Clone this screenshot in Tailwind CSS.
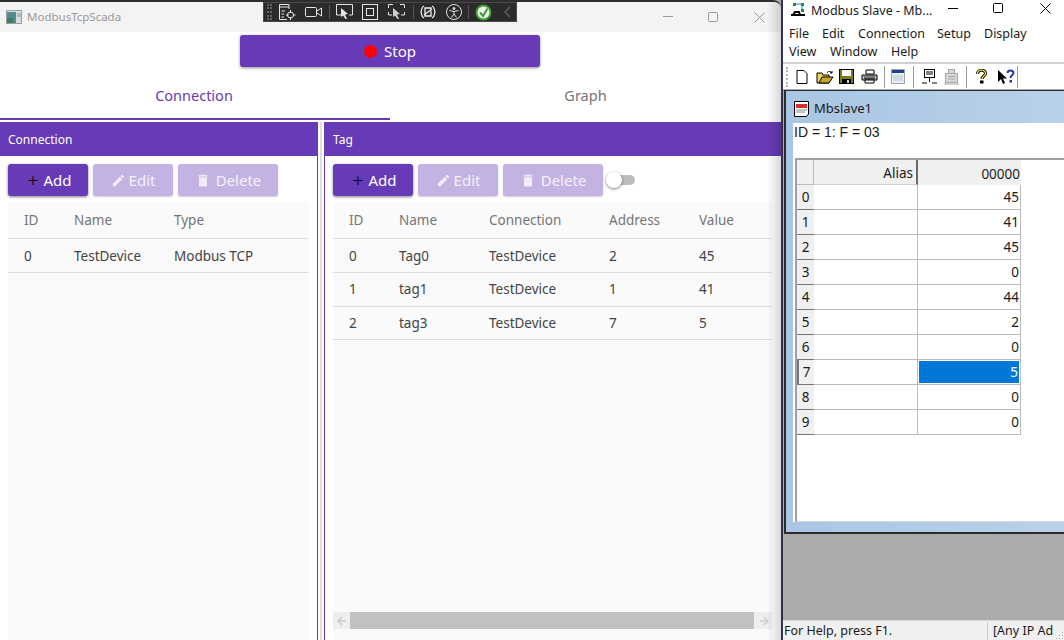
<!DOCTYPE html>
<html lang="en">
<head>
  <meta charset="UTF-8">
  <meta name="viewport" content="width=device-width, initial-scale=1.0">
  <title>ModbusTcpScada</title>
  <script src="https://cdn.jsdelivr.net/npm/@tailwindcss/browser@4"></script>
</head>
<body class="bg-[#ababab]">
  <div class="relative w-[1064px] h-[640px] overflow-hidden [font-family:'Noto_Sans',sans-serif]">

    <!-- ModbusTcpScada window -->
    <div class="absolute left-0 top-0 w-[781px] h-[640px] bg-white flex flex-col border-t-2 border-[#2e2e2e] rounded-tr-lg overflow-hidden">
      <div class="h-[30px] shrink-0 bg-[#f3f3f3] flex items-center pl-[6px] relative">
        <svg width="16" height="14" viewBox="0 0 16 14" class="mr-[5px]">
          <rect x="0.5" y="0.5" width="15" height="13" fill="#d8dde0" stroke="#9aa0a5"/>
          <rect x="1" y="2" width="9" height="11" fill="#4d8d8c"/>
          <rect x="1" y="8" width="6" height="5" fill="#3f7d5e"/>
          <rect x="11" y="3" width="4" height="4" fill="#aeb8c0"/>
        </svg>
        <span class="text-[11.5px] text-[#999999]">ModbusTcpScada</span>
        <svg width="12" height="2" class="absolute left-[663px] top-[14px]"><rect width="10" height="1" fill="#999999"/></svg>
        <svg width="11" height="11" class="absolute left-[708px] top-[10px]"><rect x="0.5" y="0.5" width="9" height="9" rx="1" fill="none" stroke="#999999"/></svg>
        <svg width="11" height="11" class="absolute left-[754px] top-[10px]"><path d="M0.5 0.5L10.5 10.5M10.5 0.5L0.5 10.5" stroke="#999999" fill="none"/></svg>
      </div>

      <div class="h-[36px] shrink-0 flex justify-center items-start pt-[3px] pr-[1px]">
        <button class="w-[300px] h-[32px] bg-[#673ab7] rounded-[3px] shadow-[0_1px_3px_rgba(0,0,0,0.45)] flex items-center justify-center gap-[7px] text-white text-[15px]">
          <span class="w-[13px] h-[13px] rounded-full bg-[#ff0000]"></span>Stop
        </button>
      </div>

      <div class="h-[52px] shrink-0 flex">
        <div class="w-[390px] border-b-2 border-[#673ab7] flex items-center justify-center text-[#673ab7] text-[14.5px] pt-[5px] pr-[2px]">Connection</div>
        <div class="w-[391px] flex items-center justify-center text-[#757575] text-[14.5px] pt-[3px]">Graph</div>
      </div>

      <div class="flex-1 flex pt-[2px] min-h-0">
        <!-- Connection panel -->
        <div class="w-[318px] border-r border-[#673ab7] flex flex-col">
          <div class="h-[34px] shrink-0 bg-[#673ab7] text-white text-[12px] flex items-center pl-[8px] pt-[2px]">Connection</div>
          <div class="flex gap-[5px] px-[8px] pt-[8px] pb-[6px]">
            <button class="w-[80px] h-[32px] bg-[#673ab7] rounded-[3px] shadow-[0_1px_3px_rgba(0,0,0,0.5)] flex items-center justify-center gap-[5px] pt-[1px] pl-[3px] text-white text-[15px]"><span class="text-black text-[19px] leading-none font-light">+</span>Add</button>
            <button class="w-[80px] h-[32px] bg-[#c4b3e2] rounded-[3px] shadow-[0_1px_2px_rgba(0,0,0,0.2)] flex items-center justify-center gap-[3px] pt-[1px] text-white/80 text-[15px]">
              <svg width="15" height="15" viewBox="0 0 24 24" fill="#f1ecf8"><path d="M3 17.25V21h3.75L17.8 9.94l-3.75-3.75L3 17.25zM20.7 7.04a1 1 0 0 0 0-1.41l-2.34-2.34a1 1 0 0 0-1.41 0l-1.83 1.83 3.75 3.75 1.83-1.83z"/></svg>Edit</button>
            <button class="w-[100px] h-[32px] bg-[#c4b3e2] rounded-[3px] shadow-[0_1px_2px_rgba(0,0,0,0.2)] flex items-center justify-center gap-[5px] pt-[1px] text-white/80 text-[15px]">
              <svg width="16" height="17" viewBox="0 0 24 24" fill="#f1ecf8"><path d="M6 19c0 1.1.9 2 2 2h8a2 2 0 0 0 2-2V7H6v12zM19 4h-3.5l-1-1h-5l-1 1H5v2h14V4z"/></svg>Delete</button>
          </div>
          <div class="ml-[8px] w-[301px] flex-1 bg-[#fafafa] rounded-t-[3px] text-[13.5px]">
            <div class="h-[37px] grid grid-cols-[50px_100px_1fr] pl-[16px] items-center border-b border-[#dddddd] text-[#757575]"><span>ID</span><span>Name</span><span>Type</span></div>
            <div class="h-[34px] grid grid-cols-[50px_100px_1fr] pl-[16px] pt-[1px] items-center border-b border-[#dddddd] text-[#444444]"><span>0</span><span>TestDevice</span><span>Modbus TCP</span></div>
          </div>
        </div>

        <div class="w-[6px] flex justify-center"><div class="w-[2px] ml-[-1px] bg-[#dddddd]"></div></div>

        <!-- Tag panel -->
        <div class="flex-1 border-l border-[#673ab7] flex flex-col relative">
          <div class="h-[34px] shrink-0 bg-[#673ab7] text-white text-[12px] flex items-center pl-[8px] pt-[2px]">Tag</div>
          <div class="flex items-center gap-[5px] pl-[8px] pt-[8px] pb-[6px]">
            <button class="w-[80px] h-[32px] bg-[#673ab7] rounded-[3px] shadow-[0_1px_3px_rgba(0,0,0,0.5)] flex items-center justify-center gap-[5px] pt-[1px] pl-[3px] text-white text-[15px]"><span class="text-black text-[19px] leading-none font-light">+</span>Add</button>
            <button class="w-[80px] h-[32px] bg-[#c4b3e2] rounded-[3px] shadow-[0_1px_2px_rgba(0,0,0,0.2)] flex items-center justify-center gap-[3px] pt-[1px] text-white/80 text-[15px]">
              <svg width="15" height="15" viewBox="0 0 24 24" fill="#f1ecf8"><path d="M3 17.25V21h3.75L17.8 9.94l-3.75-3.75L3 17.25zM20.7 7.04a1 1 0 0 0 0-1.41l-2.34-2.34a1 1 0 0 0-1.41 0l-1.83 1.83 3.75 3.75 1.83-1.83z"/></svg>Edit</button>
            <button class="w-[100px] h-[32px] bg-[#c4b3e2] rounded-[3px] shadow-[0_1px_2px_rgba(0,0,0,0.2)] flex items-center justify-center gap-[5px] pt-[1px] text-white/80 text-[15px]">
              <svg width="16" height="17" viewBox="0 0 24 24" fill="#f1ecf8"><path d="M6 19c0 1.1.9 2 2 2h8a2 2 0 0 0 2-2V7H6v12zM19 4h-3.5l-1-1h-5l-1 1H5v2h14V4z"/></svg>Delete</button>
            <div class="relative w-[30px] h-[16px] ml-[-2px]">
              <div class="absolute left-[8px] top-[3px] w-[21px] h-[10px] rounded-full bg-[#bdbdbd]"></div>
              <div class="absolute left-0 top-0 w-[16px] h-[16px] rounded-full bg-white shadow-[0_1px_3px_rgba(0,0,0,0.5)]"></div>
            </div>
          </div>
          <div class="ml-[8px] w-[439px] flex-1 bg-[#fafafa] rounded-t-[3px] text-[13.5px] flex flex-col">
            <div class="h-[37px] shrink-0 grid grid-cols-[50px_90px_120px_90px_1fr] pl-[16px] items-center border-b border-[#dddddd] text-[#757575]"><span>ID</span><span>Name</span><span>Connection</span><span>Address</span><span>Value</span></div>
            <div class="h-[34px] shrink-0 grid grid-cols-[50px_90px_120px_90px_1fr] pl-[16px] pt-[1px] items-center border-b border-[#dddddd] text-[#444444]"><span>0</span><span>Tag0</span><span>TestDevice</span><span>2</span><span>45</span></div>
            <div class="h-[34px] shrink-0 grid grid-cols-[50px_90px_120px_90px_1fr] pl-[16px] items-center border-b border-[#dddddd] text-[#444444]"><span>1</span><span>tag1</span><span>TestDevice</span><span>1</span><span>41</span></div>
            <div class="h-[33px] shrink-0 grid grid-cols-[50px_90px_120px_90px_1fr] pl-[16px] items-center border-b border-[#dddddd] text-[#444444]"><span>2</span><span>tag3</span><span>TestDevice</span><span>7</span><span>5</span></div>
            <div class="flex-1"></div>
            <!-- horizontal scrollbar -->
            <div class="h-[17px] shrink-0 mb-[11px] flex bg-[#f1f1f1]">
              <div class="w-[17px] flex items-center justify-center bg-[#eeeeee]"><svg width="10" height="10" viewBox="0 0 10 10"><path d="M5 1L1 5L5 9M1 5H9" fill="none" stroke="#cccccc" stroke-width="1.5"/></svg></div>
              <div class="flex-1 bg-[#c1c1c1]"></div>
              <div class="w-[17px] ml-[1px] flex items-center justify-center bg-[#eeeeee]"><svg width="10" height="10" viewBox="0 0 10 10"><path d="M5 1L9 5L5 9M9 5H1" fill="none" stroke="#cccccc" stroke-width="1.5"/></svg></div>
            </div>
          </div>
        </div>
      </div>
      <!-- drop shadow of the neighbouring window -->
      <div class="absolute right-0 top-0 bottom-0 w-[14px] bg-gradient-to-r from-transparent to-black/15"></div>
    </div>

    <!-- Modbus Slave window -->
    <div class="absolute left-[781px] top-0 w-[283px] h-[640px] bg-white border-l-2 border-[#38304a] flex flex-col">
      <div class="h-[25px] shrink-0 flex items-start pt-[2px] pl-[7px] relative">
        <svg width="16" height="14" viewBox="0 0 16 14" class="mr-[5px]">
          <path d="M1 13H15M3 13L5 10H9L10 13" stroke="#000000" stroke-width="2" fill="none"/>
          <path d="M6 2H12M12 2V8" stroke="#2a7de1" fill="none"/>
          <rect x="3" y="1" width="3" height="3" fill="#1f8f3a"/>
          <rect x="11" y="1" width="3" height="3" fill="#1f8f3a"/>
          <rect x="11" y="7" width="3" height="3" fill="#1f8f3a"/>
        </svg>
        <span class="text-[12.5px] text-[#1a1a1a] whitespace-nowrap">Modbus Slave - Mb...</span>
        <svg width="11" height="2" class="absolute left-[165px] top-[8px]"><rect width="10" height="1" fill="#000000"/></svg>
        <svg width="11" height="11" class="absolute left-[210px] top-[3px]"><rect x="0.5" y="0.5" width="9" height="9" rx="1" fill="none" stroke="#000000"/></svg>
        <svg width="11" height="11" class="absolute left-[257px] top-[3px]"><path d="M0.5 0.5L10.5 10.5M10.5 0.5L0.5 10.5" stroke="#000000" fill="none"/></svg>
      </div>
      <div class="h-[18px] shrink-0 flex items-center pl-[6px] text-[12.5px] text-[#1a1a1a]">
        <span class="w-[33px]">File</span><span class="w-[36px]">Edit</span><span class="w-[79px]">Connection</span><span class="w-[47px]">Setup</span><span>Display</span>
      </div>
      <div class="h-[19px] shrink-0 flex items-center pl-[6px] text-[12.5px] text-[#1a1a1a]">
        <span class="w-[41px]">View</span><span class="w-[61px]">Window</span><span>Help</span>
      </div>
      <!-- toolbar -->
      <div class="h-[27px] shrink-0 border-t-2 border-[#cfcfcf] flex items-center pl-[3px] relative">
        <div class="w-[2px] h-[20px] mr-[8px] border-l-2 border-dotted border-[#b5b5b5]"></div>
        <svg width="12" height="14" viewBox="0 0 12 14" class="mr-[8px]"><path d="M1 .5H8L11 3.5V13.5H1Z" fill="#ffffff" stroke="#000000"/></svg>
        <svg width="18" height="14" viewBox="0 0 18 14" class="mr-[5px]"><path d="M1 3H6L7 5H13V13H1Z" fill="#e8d45a" stroke="#000000"/><path d="M3 13L6 7H17L13 13Z" fill="#c9a92a" stroke="#000000"/><path d="M11 3C12 1 14 1 16 3M16 1V3H14" fill="none" stroke="#000000"/></svg>
        <svg width="15" height="15" viewBox="0 0 15 15" class="mr-[7px]"><rect x=".5" y=".5" width="14" height="14" fill="#7c7c12" stroke="#000000"/><rect x="3" y="1" width="9" height="6" fill="#ffffff"/><rect x="3" y="10" width="9" height="5" fill="#000000"/><rect x="8" y="11" width="2" height="3" fill="#cfcfcf"/></svg>
        <svg width="17" height="15" viewBox="0 0 17 15" class="mr-[6px]"><path d="M5 1H13V5H5Z" fill="#ffffff" stroke="#000000"/><path d="M1 6H16V11H1Z" fill="#bdbdbd" stroke="#000000"/><path d="M4 11H13V14H4Z" fill="#ffffff" stroke="#000000"/><path d="M3 8H14M3 9.5H14" stroke="#000000" stroke-width=".7"/></svg>
        <div class="w-px h-[22px] bg-[#9c9c9c] mr-[6px]"></div>
        <svg width="14" height="15" viewBox="0 0 14 15" class="mr-[8px]"><rect x=".5" y=".5" width="13" height="14" fill="#e8eef5" stroke="#9aa7b5"/><rect x="1" y="1" width="12" height="3" fill="#1f3f8f"/><path d="M2 7H12M2 9H12M2 11H12" stroke="#b8c2cc"/></svg>
        <div class="w-px h-[22px] bg-[#9c9c9c] mr-[7px]"></div>
        <svg width="17" height="16" viewBox="0 0 17 16" class="mr-[5px]"><rect x="3.500" y=".5" width="10" height="8" fill="#ffffff" stroke="#000000"/><path d="M5 3H12M5 5H12M8.500 9V13M1 14H6M11 14H16" stroke="#000000"/></svg>
        <svg width="17" height="16" viewBox="0 0 17 16" class="mr-[6px]"><rect x="5.500" y=".5" width="6" height="4" fill="#d6d6d6" stroke="#a8a8a8"/><rect x="2.500" y="4.500" width="12" height="9" fill="#d6d6d6" stroke="#a8a8a8"/><path d="M5 7.500H12M5 10H12M1 15H16" stroke="#a8a8a8"/></svg>
        <div class="w-px h-[22px] bg-[#9c9c9c] mr-[9px]"></div>
        <svg width="11" height="15" viewBox="0 0 11 15" class="mr-[10px]"><path d="M1.500 5C1.500 0 9.500 0 9.500 4.500C9.500 7 6 7 6 10" fill="none" stroke="#000000" stroke-width="3"/><path d="M1.500 5C1.500 0 9.500 0 9.500 4.500C9.500 7 6 7 6 10" fill="none" stroke="#f2e33a" stroke-width="1.300"/><rect x="4" y="11.500" width="3.500" height="3" fill="#000000"/></svg>
        <svg width="18" height="16" viewBox="0 0 18 16" class="mr-[2px]"><path d="M1 1V13L4 10L6 15L8 14L6 9.500H10Z" fill="#000000"/><path d="M10.500 4C10.500 .5 16.500 .5 16.500 4C16.500 6 13.500 6 13.500 9" fill="none" stroke="#1f3f9f" stroke-width="2"/><rect x="12.500" y="11" width="2.500" height="2.500" fill="#1f3f9f"/></svg>
        <div class="w-px h-[22px] bg-[#9c9c9c]"></div>
      </div>

      <!-- MDI area -->
      <div class="flex-1 bg-[#ababab] pl-[1px] pt-[1px] min-h-0 flex flex-col">
        <div class="h-[444px] shrink-0 bg-gradient-to-r from-[#a9c6e4] to-[#b9d1ea] border-l-2 border-t border-b-2 border-[#2b2b2b] pl-[7px] pb-[10px] flex flex-col">
          <div class="h-[32px] shrink-0 flex items-center pt-[4px] text-[13px] text-[#1a1a1a]">
            <svg width="15" height="16" viewBox="0 0 15 16" class="ml-[1px] mr-[5px]">
              <path d="M.5 .5H14.500V13L12.500 15.500H.5Z" fill="#ffffff" stroke="#000000"/>
              <rect x="2" y="3" width="11" height="4" fill="#d92d2d"/>
              <path d="M2 9H13M2 11H11" stroke="#8a8a8a"/>
            </svg>
            Mbslave1
          </div>
          <div class="flex-1 bg-white flex flex-col min-h-0">
            <div class="h-[35px] shrink-0 pl-[1px] text-[14px] text-[#1a1a1a] leading-[18px] [font-family:'Liberation_Sans',sans-serif]">ID = 1: F = 03</div>
            <div class="flex-1 ml-[2px] border-t-2 border-l-2 border-[#a0a0a0] border-b border-b-[#d8d8d8] min-h-0 text-[13.5px] text-[#1a1a1a]">
              <div class="w-[224px] grid grid-cols-[17px_104px_103px] auto-rows-[25px]">
                <div class="bg-[#f0f0f0] border-b border-[#bbbbbb] border-r"></div>
                <div class="bg-[#f0f0f0] border-b border-b-[#d0d0d0] border-r-2 border-r-[#6b6b6b] flex items-center justify-end pr-[3px] pt-[3px]">Alias</div>
                <div class="bg-[#f0f0f0] flex items-center justify-end pr-[1px] pt-[3px]">00000</div>

                <div class="bg-[#f0f0f0] border-b border-[#777777] flex items-center justify-center pt-[1px]">0</div>
                <div class="border-b border-r border-[#bbbbbb]"></div>
                <div class="border-b border-r border-[#bbbbbb] flex items-center justify-end pr-[1px] pt-[1px]">45</div>

                <div class="bg-[#f0f0f0] border-b border-[#777777] flex items-center justify-center pt-[1px]">1</div>
                <div class="border-b border-r border-[#bbbbbb]"></div>
                <div class="border-b border-r border-[#bbbbbb] flex items-center justify-end pr-[1px] pt-[1px]">41</div>

                <div class="bg-[#f0f0f0] border-b border-[#777777] flex items-center justify-center pt-[1px]">2</div>
                <div class="border-b border-r border-[#bbbbbb]"></div>
                <div class="border-b border-r border-[#bbbbbb] flex items-center justify-end pr-[1px] pt-[1px]">45</div>

                <div class="bg-[#f0f0f0] border-b border-[#777777] flex items-center justify-center pt-[1px]">3</div>
                <div class="border-b border-r border-[#bbbbbb]"></div>
                <div class="border-b border-r border-[#bbbbbb] flex items-center justify-end pr-[1px] pt-[1px]">0</div>

                <div class="bg-[#f0f0f0] border-b border-[#777777] flex items-center justify-center pt-[1px]">4</div>
                <div class="border-b border-r border-[#bbbbbb]"></div>
                <div class="border-b border-r border-[#bbbbbb] flex items-center justify-end pr-[1px] pt-[1px]">44</div>

                <div class="bg-[#f0f0f0] border-b border-[#777777] flex items-center justify-center pt-[1px]">5</div>
                <div class="border-b border-r border-[#bbbbbb]"></div>
                <div class="border-b border-r border-[#bbbbbb] flex items-center justify-end pr-[1px] pt-[1px]">2</div>

                <div class="bg-[#f0f0f0] border-b border-[#777777] flex items-center justify-center pt-[1px]">6</div>
                <div class="border-b border-r border-[#bbbbbb]"></div>
                <div class="border-b border-r border-[#bbbbbb] flex items-center justify-end pr-[1px] pt-[1px]">0</div>

                <div class="bg-[#f0f0f0] border-b border-l-2 border-[#777777] flex items-center justify-center pt-[1px]">7</div>
                <div class="border-b border-r border-[#bbbbbb]"></div>
                <div class="border-b border-r border-[#bbbbbb] p-[1px]"><div class="h-full bg-[#0078d7] text-white flex items-center justify-end pr-[1px]">5</div></div>

                <div class="bg-[#f0f0f0] border-b border-[#777777] flex items-center justify-center pt-[1px]">8</div>
                <div class="border-b border-r border-[#bbbbbb]"></div>
                <div class="border-b border-r border-[#bbbbbb] flex items-center justify-end pr-[1px] pt-[1px]">0</div>

                <div class="bg-[#f0f0f0] border-b border-[#777777] flex items-center justify-center pt-[1px]">9</div>
                <div class="border-b border-r border-[#bbbbbb]"></div>
                <div class="border-b border-r border-[#bbbbbb] flex items-center justify-end pr-[1px] pt-[1px]">0</div>
              </div>
            </div>
          </div>
        </div>
        <div class="flex-1"></div>
        <!-- status bar -->
        <div class="h-[20px] shrink-0 ml-[-1px] bg-[#f0f0f0] border-t border-[#d8d8d8] flex items-end text-[12.5px] leading-[18px] text-[#1a1a1a] whitespace-nowrap relative overflow-hidden">
          <span class="w-[205px] pl-[1px] border-r border-[#c8c8c8]">For Help, press F1.</span>
          <span class="pl-[5px] w-[67px] overflow-hidden">[Any IP Ad</span>
          <svg width="9" height="9" viewBox="0 0 9 9" class="absolute right-0 bottom-0"><path d="M7 1h1v1H7zM4 4h1v1H4zM7 4h1v1H7zM1 7h1v1H1zM4 7h1v1H4zM7 7h1v1H7z" fill="#a8a8a8"/></svg>
        </div>
      </div>
    </div>

    <!-- Visual Studio in-app toolbar -->
    <div class="absolute left-[263px] top-[2px] w-[254px] h-[20px] bg-[#2b2b2b] border border-[#4a4a4a] flex items-center">
      <div class="w-[5px] h-[16px] ml-[3px] mr-[6px] border-l-2 border-r-2 border-dotted border-[#666666]"></div>
      <svg width="18" height="18" viewBox="0 0 18 18" class="mr-[9px]" fill="none" stroke="#e6e6e6">
        <path d="M1.500 1.500H11V6M1.500 1.500V16.500H9M1.500 4H11M3.500 8H7M3.500 11H6M3.500 14H6"/>
        <circle cx="12.500" cy="12" r="3"/><path d="M12.500 7V10M12.500 14V17M8 12H10.500M15 12H17.500"/>
      </svg>
      <svg width="17" height="12" viewBox="0 0 17 12" class="mr-[7px]" fill="none" stroke="#e6e6e6"><rect x=".5" y="1.500" width="11" height="9" rx="1"/><path d="M12 5L16.500 2V10L12 7"/></svg>
      <div class="w-px h-[14px] bg-[#555555] mr-[6px]"></div>
      <svg width="17" height="16" viewBox="0 0 17 16" class="mr-[9px]"><path d="M5 11H.5V.5H16.500V11H13" fill="none" stroke="#e6e6e6"/><path d="M5 4L12 10L9 10.500L11 15H9.500L7 11.500L5 13Z" fill="#e6e6e6"/></svg>
      <svg width="16" height="16" viewBox="0 0 16 16" class="mr-[10px]" fill="none" stroke="#e6e6e6"><rect x=".5" y=".5" width="15" height="15"/><rect x="4.500" y="4.500" width="7" height="7"/></svg>
      <svg width="17" height="16" viewBox="0 0 17 16" class="mr-[8px]"><path d="M.5 4V.5H5M12 .5H16.500V4M16.500 8V11H13M4 11H.5V8" fill="none" stroke="#e6e6e6"/><path d="M5 4L12 10L9 10.500L11 15H9.500L7 11.500L5 13Z" fill="#cfcfcf"/></svg>
      <div class="w-px h-[14px] bg-[#555555] mr-[6px]"></div>
      <svg width="16" height="14" viewBox="0 0 16 14" class="mr-[10px]" fill="none" stroke="#f0f0f0" stroke-width="1.300"><path d="M4 1C1 2 2 5 1 7C2 9 1 12 4 13M12 1C15 2 14 5 15 7C14 9 15 12 12 13M5 3H11V11H5ZM4 10L12 4"/></svg>
      <svg width="16" height="16" viewBox="0 0 16 16" class="mr-[6px]" fill="none" stroke="#e0e0e0"><circle cx="8" cy="8" r="7.500"/><circle cx="8" cy="4.500" r="1" fill="#e0e0e0"/><path d="M3.500 6.500L8 7.500L12.500 6.500M8 7.500V10M8 10L5.500 13.500M8 10L10.500 13.500"/></svg>
      <div class="w-px h-[14px] bg-[#555555] mr-[6px]"></div>
      <svg width="17" height="17" viewBox="0 0 17 17" class="mr-[12px]"><circle cx="8.500" cy="8.500" r="8" fill="#3f9c35"/><circle cx="8.500" cy="8.500" r="6" fill="#f2f2f2"/><path d="M5 8.500L8 12L12.500 4.500" fill="none" stroke="#3f9c35" stroke-width="2"/></svg>
      <svg width="7" height="12" viewBox="0 0 7 12" fill="none" stroke="#5f5f5f" stroke-width="1.300"><path d="M6 1L1 6L6 11"/></svg>
    </div>
  </div>
</body>
</html>
